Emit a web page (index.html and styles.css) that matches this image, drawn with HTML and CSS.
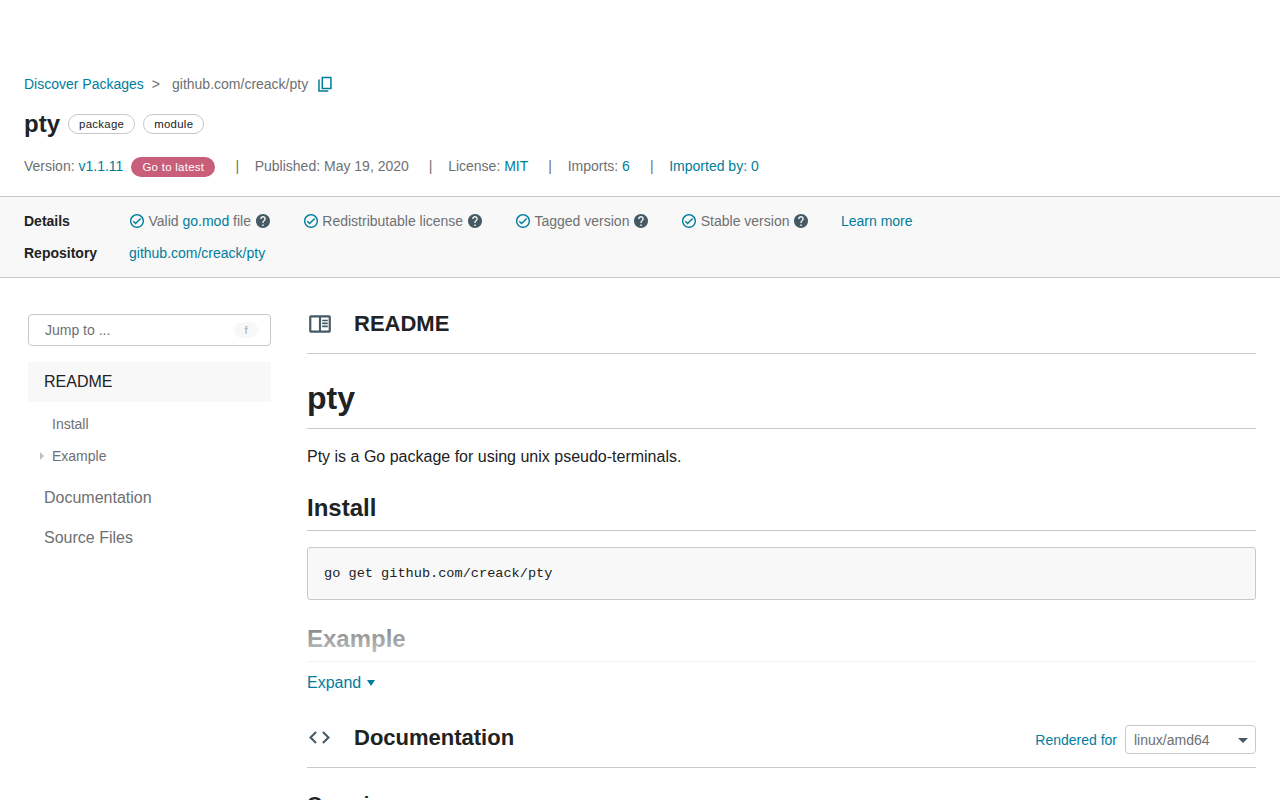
FILE: index.html
```html
<!DOCTYPE html>
<html lang="en">
<head>
<meta charset="utf-8">
<title>pty package - github.com/creack/pty</title>
<link rel="stylesheet" href="styles.css">
</head>
<body>
<svg class="sprite" aria-hidden="true">
  <symbol id="check" viewBox="2 2 20 20"><path d="M12 2C6.48 2 2 6.48 2 12s4.48 10 10 10 10-4.48 10-10S17.52 2 12 2zm0 18c-4.41 0-8-3.59-8-8s3.59-8 8-8 8 3.59 8 8-3.59 8-8 8zm4.59-12.42L10 14.17l-2.59-2.58L6 13l4 4 8-8z"/></symbol>
  <symbol id="help" viewBox="2 2 20 20"><path d="M12 2C6.48 2 2 6.48 2 12s4.48 10 10 10 10-4.48 10-10S17.52 2 12 2zm1 17h-2v-2h2v2zm2.07-7.75l-.9.92C13.45 12.9 13 13.5 13 15h-2v-.5c0-1.1.45-2.1 1.17-2.83l1.24-1.26c.37-.36.59-.86.59-1.41 0-1.1-.9-2-2-2s-2 .9-2 2H8c0-2.21 1.79-4 4-4s4 1.79 4 4c0 .88-.36 1.68-.93 2.25z"/></symbol>
</svg>
<header class="header">
  <nav class="breadcrumb">
    <a href="#">Discover Packages</a><span class="crumb-sep">&gt;</span><span>github.com/creack/pty</span>
    <svg class="copy" viewBox="0 0 16 16"><path d="M5.300 1.400h8.600v11.100H5.300zM2 3.600v11.400h9.300"/></svg>
  </nav>
  <div class="title-row">
    <h1 class="title">pty</h1><span class="chip">package</span><span class="chip">module</span>
  </div>
  <div class="meta">
    <span>Version: <a href="#">v1.1.11</a></span><a class="latest" href="#">Go to latest</a>
    <span class="bar">|</span><span>Published: May 19, 2020</span>
    <span class="bar">|</span><span>License: <a href="#">MIT</a></span>
    <span class="bar">|</span><span>Imports: <a href="#">6</a></span>
    <span class="bar">|</span><a href="#">Imported by: 0</a>
  </div>
</header>
<section class="details">
  <div class="detail-row">
    <strong class="detail-label">Details</strong>
    <div class="checks">
      <span class="check-item"><svg class="check"><use href="#check"/></svg><span>Valid <a href="#">go.mod</a> file</span><svg class="help"><use href="#help"/></svg></span>
      <span class="check-item"><svg class="check"><use href="#check"/></svg><span>Redistributable license</span><svg class="help"><use href="#help"/></svg></span>
      <span class="check-item"><svg class="check"><use href="#check"/></svg><span>Tagged version</span><svg class="help"><use href="#help"/></svg></span>
      <span class="check-item"><svg class="check"><use href="#check"/></svg><span>Stable version</span><svg class="help"><use href="#help"/></svg></span>
      <a class="learn" href="#">Learn more</a>
    </div>
  </div>
  <div class="detail-row">
    <strong class="detail-label">Repository</strong><a href="#">github.com/creack/pty</a>
  </div>
</section>
<div class="layout">
  <aside class="sidebar">
    <div class="jump"><span>Jump to ...</span><kbd class="key">f</kbd></div>
    <nav class="tree">
      <a class="node active" href="#">README</a>
      <div class="subtree">
        <a class="leaf" href="#">Install</a>
        <a class="leaf expandable" href="#">Example</a>
      </div>
      <a class="node" href="#">Documentation</a>
      <a class="node" href="#">Source Files</a>
    </nav>
  </aside>
  <main class="content">
    <div class="section-head">
      <svg class="section-icon book" viewBox="0 0 24 24"><path d="M20.500 4h-17C2.700 4 2 4.700 2 5.500v13c0 .8.7 1.500 1.500 1.500h17c.8 0 1.500-.7 1.500-1.500v-13c0-.8-.7-1.500-1.500-1.500zM4 6h7v12H4zm16 12h-7V6h7zM14 8h5.200v1.500H14zm0 2.700h5.200v1.500H14zm0 2.700h5.200v1.500H14z" fill-rule="evenodd"/></svg>
      <h2 class="section-title">README</h2>
    </div>
    <div class="readme">
      <h3 class="readme-title">pty</h3>
      <p class="intro">Pty is a Go package for using unix pseudo-terminals.</p>
      <h4 class="readme-sub">Install</h4>
      <pre class="code">go get github.com/creack/pty</pre>
      <h4 class="readme-sub">Example</h4>
    </div>
    <a class="expand" href="#">Expand<span class="expand-arrow"></span></a>
    <div class="section-head doc-head">
      <svg class="section-icon" viewBox="0 0 24 24"><path d="M9.400 16.600L4.800 12l4.600-4.600L8 6l-6 6 6 6 1.400-1.400zm5.200 0l4.600-4.600-4.600-4.600L16 6l6 6-6 6-1.400-1.400z"/></svg>
      <h2 class="section-title">Documentation</h2>
      <a class="rendered" href="#">Rendered for</a>
      <div class="select"><span>linux/amd64</span><span class="select-arrow"></span></div>
    </div>
    <h3 class="overview">Overview</h3>
  </main>
</div>
</body>
</html>
```
FILE: styles.css
```css
* { box-sizing: border-box; }
html, body { height: 800px; overflow: hidden; }
body {
  margin: 0;
  background: #fff;
  color: #202224;
  font: 14px/20px "Liberation Sans", Arial, sans-serif;
}
a { color: #007d9c; text-decoration: none; }
h1, h2, h3, h4, p, pre { margin: 0; }
svg { flex: none; }
.sprite { display: none; }

.header { height: 196px; padding: 74px 24px 0; color: #6e7072; }
.breadcrumb { display: flex; align-items: center; height: 20px; }
.crumb-sep { margin: 0 12px 0 8px; }
.copy { width: 16px; height: 16px; margin-left: 9px; fill: none; stroke: #007d9c; stroke-width: 1.5; }
.title-row { display: flex; align-items: center; height: 32px; margin-top: 14px; gap: 8px; }
.title { color: #202224; font-size: 24px; line-height: 32px; }
.chip {
  height: 20px;
  padding: 0 10px;
  border: 1px solid #c6c8ca;
  border-radius: 10px;
  color: #202224;
  font-size: 11.4px;
  letter-spacing: 0.3px;
  line-height: 19px;
}
.meta { display: flex; align-items: center; height: 20px; margin-top: 16px; }
.latest {
  width: 84px;
  height: 20px;
  margin: 2px 0 0 8px;
  border-radius: 10px;
  background: #c85e7a;
  color: #fff;
  font-size: 11.4px;
  letter-spacing: 0.3px;
  line-height: 20px;
  text-align: center;
}
.bar { margin: 0 15.7px 0 20px; }

.details {
  height: 82px;
  padding: 8px 24px;
  border: solid #c6c8ca;
  border-width: 1px 0;
  background: #f8f8f8;
}
.detail-row { display: flex; align-items: center; height: 32px; }
.detail-label { width: 105px; }
.checks { display: flex; gap: 34px; color: #6e7072; padding-left: 1px; }
.check-item { display: flex; align-items: center; }
.check, .help { width: 14px; height: 14px; }
.check { margin-right: 4.5px; fill: #007d9c; }
.help { margin-left: 5px; fill: #455a64; }
.check-item + .check-item { margin-left: -0.2px; }
.learn { margin-left: -1.5px; }

.layout { display: flex; padding: 0 24px 0 28px; gap: 36px; }
.sidebar { width: 243px; padding-top: 36px; }
.jump {
  display: flex;
  align-items: center;
  justify-content: space-between;
  height: 32px;
  padding: 0 12px 0 16px;
  border: 1px solid #c6c8ca;
  border-radius: 4px;
  color: #6e7072;
}
.key {
  width: 24px;
  height: 16px;
  border-radius: 8px;
  background: #f8f8f8;
  color: #a9abad;
  font: 11.4px/16px "Liberation Sans", sans-serif;
  text-align: center;
}
.tree { display: flex; flex-direction: column; margin-top: 16px; }
.node { height: 40px; padding-left: 16px; color: #6e7072; font-size: 16px; line-height: 39px; }
.active { background: #f8f8f8; color: #202224; }
.subtree { padding: 6px 0 6px 12px; }
.leaf { display: flex; align-items: center; height: 32px; padding-left: 12px; color: #6e7072; }
.expandable { padding-left: 0; }
.expandable::before {
  content: "";
  margin-right: 8px;
  border: solid transparent;
  border-width: 4px 0 4px 4px;
  border-left-color: #c0c2c4;
}

.content { flex: 1; min-width: 0; }
.section-head { display: flex; align-items: center; height: 76px; padding-top: 16px; border-bottom: 1px solid #c6c8ca; }
.section-icon { width: 25px; height: 25px; margin-right: 22px; fill: #455a64; }
.book { width: 26px; height: 26px; margin-right: 21px; }
.section-title { padding-top: 1px; font-size: 22px; line-height: 28px; }
.readme { position: relative; height: 312px; overflow: hidden; }
.readme::after {
  content: "";
  position: absolute;
  inset: auto 0 0;
  height: 64px;
  background: linear-gradient(rgba(255, 255, 255, .2), rgba(255, 255, 255, .85));
}
.readme-title { height: 75px; padding-top: 24px; border-bottom: 1px solid #c6c8ca; font-size: 32px; line-height: 40px; }
.intro { padding-top: 16px; font-size: 16px; line-height: 24px; }
.readme-sub { height: 38px; margin-top: 24px; border-bottom: 1px solid #c6c8ca; font-size: 24px; line-height: 30px; }
.code {
  height: 53px;
  margin-top: 16px;
  padding: 16px;
  border: 1px solid #c6c8ca;
  border-radius: 3px;
  background: #f8f8f8;
  font: 13.6px/20px "Liberation Mono", monospace;
}
.expand { display: flex; align-items: center; height: 24px; margin-top: 5px; font-size: 16px; }
.expand-arrow { margin-left: 6px; border: solid transparent; border-width: 6px 4px 0; border-top-color: #007d9c; }
.doc-head { height: 73px; padding-top: 13px; }
.rendered { margin-left: auto; padding-top: 5px; }
.select {
  display: flex;
  align-items: center;
  justify-content: space-between;
  width: 131px;
  height: 29px;
  margin: 4px 0 0 8px;
  padding: 0 7px 0 8px;
  border: 1px solid #c6c8ca;
  border-radius: 4px;
  color: #6e7072;
}
.select-arrow { margin-top: 1px; border: solid transparent; border-width: 5px 5px 0; border-top-color: #455a64; }
.overview { padding-top: 24px; font-size: 20px; line-height: 24px; }
```
